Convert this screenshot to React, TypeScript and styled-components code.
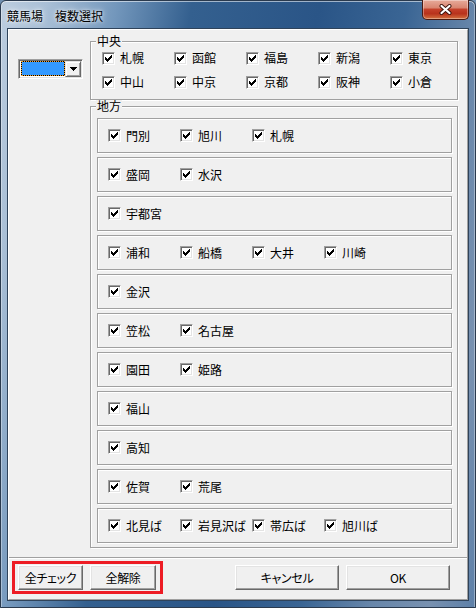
// 競馬場 複数選択 dialog (Windows 7 classic style)
import React from "react";
import styled, { createGlobalStyle } from "styled-components";

// -------------------- Data --------------------
const centralTracks = ["札幌", "函館", "福島", "新潟", "東京", "中山", "中京", "京都", "阪神", "小倉"];

const localTracks: string[][] = [
  ["門別", "旭川", "札幌"],
  ["盛岡", "水沢"],
  ["宇都宮"],
  ["浦和", "船橋", "大井", "川崎"],
  ["金沢"],
  ["笠松", "名古屋"],
  ["園田", "姫路"],
  ["福山"],
  ["高知"],
  ["佐賀", "荒尾"],
  ["北見ば", "岩見沢ば", "帯広ば", "旭川ば"],
];

// -------------------- Styles --------------------
const GlobalStyle = createGlobalStyle`
  html, body {
    margin: 0;
    padding: 0;
    width: 476px;
    height: 608px;
    overflow: hidden;
    background: #6f8fb0;
  }
  body {
    font-family: "Noto Sans CJK JP", "Noto Sans", sans-serif;
    font-size: 12px;
    color: #000;
  }
`;

const Window = styled.div`
  box-sizing: border-box;
  width: 476px;
  height: 608px;
  display: flex;
  flex-direction: column;
  border: 1px solid #2a3a4e;
  border-radius: 6px 6px 0 0;
  background: linear-gradient(
    100deg,
    #bccddf 0%,
    #a9bfd6 8%,
    #7397bc 20%,
    #34608f 33%,
    #2a5587 55%,
    #3a6594 70%,
    #6786aa 82%,
    #7891b0 92%,
    #5d80a8 100%
  );
  box-shadow: inset 0 1px 0 rgba(255, 255, 255, 0.55), inset 1px 0 0 rgba(255, 255, 255, 0.35),
    inset -1px 0 0 rgba(255, 255, 255, 0.35);
`;

const TitleBar = styled.div`
  height: 27px;
  flex: none;
  display: flex;
  justify-content: space-between;
  align-items: flex-start;
`;

const Title = styled.div`
  padding: 8px 0 0 6px;
  line-height: 14px;
  font-size: 12px;
  color: #000;
  text-shadow: 0 0 6px rgba(255, 255, 255, 0.9), 0 0 3px rgba(255, 255, 255, 0.8);
  white-space: pre;
`;

const CloseButton = styled.div`
  box-sizing: border-box;
  width: 47px;
  height: 20px;
  margin: -1px 6px 0 0;
  display: flex;
  align-items: center;
  justify-content: center;
  border: 1px solid #4a1a12;
  border-top: none;
  border-radius: 0 0 5px 5px;
  background: linear-gradient(
    to bottom,
    #e7aa9a 0%,
    #d98672 40%,
    #c4402a 50%,
    #b8321c 72%,
    #d4723f 100%
  );
  box-shadow: inset 0 0 0 1px rgba(255, 255, 255, 0.35);
`;

const Client = styled.div`
  flex: 1;
  margin: 0 6px 6px;
  display: flex;
  border: 1px solid #2f435a;
  background: #f0f0f0;
`;

const Surface = styled.div`
  flex: 1;
  display: flex;
  flex-direction: column;
  border: 1px solid;
  border-color: #fff #a0a0a0 #a0a0a0 #fff;
`;

const MainPanel = styled.div`
  height: 527px;
  flex: none;
  display: flex;
  align-items: flex-start;
`;

const Combo = styled.div`
  box-sizing: border-box;
  width: 65px;
  height: 20px;
  margin: 29px 0 0 9px;
  padding: 1px;
  display: flex;
  align-items: stretch;
  background: #fff;
  border: 1px solid;
  border-color: #a0a0a0 #fff #fff #a0a0a0;
  box-shadow: inset 1px 1px 0 #696969, inset -1px -1px 0 #e3e3e3;
`;

const ComboValue = styled.div`
  flex: 1;
  margin: 0 0 1px 1px;
  background: #3399ff;
  border: 1px solid #000;
  outline: 1px dotted #f7a530;
  outline-offset: -1px;
`;

const ComboArrow = styled.div`
  box-sizing: border-box;
  width: 16px;
  flex: none;
  display: flex;
  align-items: center;
  justify-content: center;
  background: #f0f0f0;
  border: 1px solid;
  border-color: #e3e3e3 #696969 #696969 #e3e3e3;
  box-shadow: inset 1px 1px 0 #fff, inset -1px -1px 0 #a0a0a0;
`;

const Groups = styled.div`
  width: 368px;
  margin: 11px 0 0 7px;
  display: flex;
  flex-direction: column;
  gap: 6px;
`;

const Group = styled.div`
  position: relative;
  border: 1px solid #a0a0a0;
  box-shadow: inset 1px 1px 0 #fff, 1px 1px 0 #fff;
`;

const Legend = styled.span`
  position: absolute;
  top: -7px;
  left: 5px;
  padding: 0 1px;
  line-height: 12px;
  background: #f0f0f0;
`;

const CentralGrid = styled.div`
  display: grid;
  grid-template-columns: repeat(5, 72px);
  grid-auto-rows: 24px;
  align-items: center;
  padding: 4px 0 5px 11px;
`;

const LocalList = styled.div`
  display: flex;
  flex-direction: column;
  gap: 4px;
  padding: 11px 5px 4px 6px;
`;

const SubBox = styled.div`
  box-sizing: border-box;
  height: 35px;
  display: grid;
  grid-template-columns: repeat(4, 72px);
  align-items: center;
  padding-left: 10px;
  border: 1px solid #a0a0a0;
  box-shadow: inset 1px 1px 0 #fff, 1px 1px 0 #fff;
`;

const Item = styled.div`
  display: flex;
  align-items: center;
  white-space: nowrap;
`;

const Box = styled.div`
  box-sizing: border-box;
  width: 13px;
  height: 13px;
  flex: none;
  padding: 2px;
  background: #fff;
  border: 1px solid;
  border-color: #a0a0a0 #fff #fff #a0a0a0;
  box-shadow: inset 1px 1px 0 #696969, inset -1px -1px 0 #e3e3e3;
  display: flex;
`;

const ItemLabel = styled.span`
  margin-left: 5px;
  line-height: 14px;
`;

const ButtonBar = styled.div`
  flex: 1;
  display: flex;
  align-items: flex-start;
  padding: 3px 0 0 3px;
  border-top: 1px solid #a0a0a0;
  box-shadow: inset 0 1px 0 #fff;
`;

const RedFrame = styled.div`
  display: flex;
  gap: 7px;
  padding: 1px 4px 1px 3px;
  border: 3px solid #ed1c24;
`;

const RightButtons = styled.div`
  display: flex;
  gap: 7px;
  margin: 4px 17px 0 auto;
`;

const Button = styled.button<{ $width: number }>`
  box-sizing: border-box;
  width: ${(p) => p.$width}px;
  height: 25px;
  padding: 0;
  font-family: inherit;
  font-size: 12px;
  line-height: 14px;
  font-feature-settings: "palt";
  letter-spacing: -0.3px;
  color: #000;
  background: #f0f0f0;
  border: 1px solid;
  border-color: #fff #696969 #696969 #fff;
  box-shadow: inset -1px -1px 0 #a0a0a0, inset 1px 1px 0 #e3e3e3;
  cursor: default;
`;

// -------------------- Components --------------------
const CheckMark = () => (
  <svg width="7" height="7" viewBox="0 0 7 7" shapeRendering="crispEdges">
    <path
      fill="#000"
      d="M6 0h1v1h-1z M5 1h2v1h-2z M0 2h1v1h-1z M4 2h3v1h-3z M0 3h2v1h-2z M3 3h3v1h-3z M0 4h5v1h-5z M1 5h3v1h-3z M2 6h1v1h-1z"
    />
  </svg>
);

const CheckItem = ({ label }: { label: string }) => (
  <Item>
    <Box>
      <CheckMark />
    </Box>
    <ItemLabel>{label}</ItemLabel>
  </Item>
);

const App = (): JSX.Element => {
  return (
    <>
      <GlobalStyle />
      <Window>
        <TitleBar>
          <Title>競馬場　複数選択</Title>
          <CloseButton>
            <svg width="13" height="11" viewBox="0 0 13 11">
              <path d="M2.5 2 L10.5 9 M10.5 2 L2.5 9" stroke="#3a120c" strokeWidth="4" strokeLinecap="round" />
              <path d="M2.5 2 L10.5 9 M10.5 2 L2.5 9" stroke="#fff" strokeWidth="2.2" strokeLinecap="round" />
            </svg>
          </CloseButton>
        </TitleBar>
        <Client>
          <Surface>
            <MainPanel>
              <Combo>
                <ComboValue />
                <ComboArrow>
                  <svg width="7" height="4" viewBox="0 0 7 4" shapeRendering="crispEdges">
                    <path d="M0 0h7v1h-7z M1 1h5v1h-5z M2 2h3v1h-3z M3 3h1v1h-1z" fill="#000" />
                  </svg>
                </ComboArrow>
              </Combo>
              <Groups>
                <Group>
                  <Legend>中央</Legend>
                  <CentralGrid>
                    {centralTracks.map((name, i) => (
                      <CheckItem key={`c-${i}`} label={name} />
                    ))}
                  </CentralGrid>
                </Group>
                <Group>
                  <Legend>地方</Legend>
                  <LocalList>
                    {localTracks.map((row, r) => (
                      <SubBox key={`r-${r}`}>
                        {row.map((name) => (
                          <CheckItem key={name} label={name} />
                        ))}
                      </SubBox>
                    ))}
                  </LocalList>
                </Group>
              </Groups>
            </MainPanel>
            <ButtonBar>
              <RedFrame>
                <Button $width={65}>全チェック</Button>
                <Button $width={66}>全解除</Button>
              </RedFrame>
              <RightButtons>
                <Button $width={104}>キャンセル</Button>
                <Button $width={104}>OK</Button>
              </RightButtons>
            </ButtonBar>
          </Surface>
        </Client>
      </Window>
    </>
  );
};

export default App;
